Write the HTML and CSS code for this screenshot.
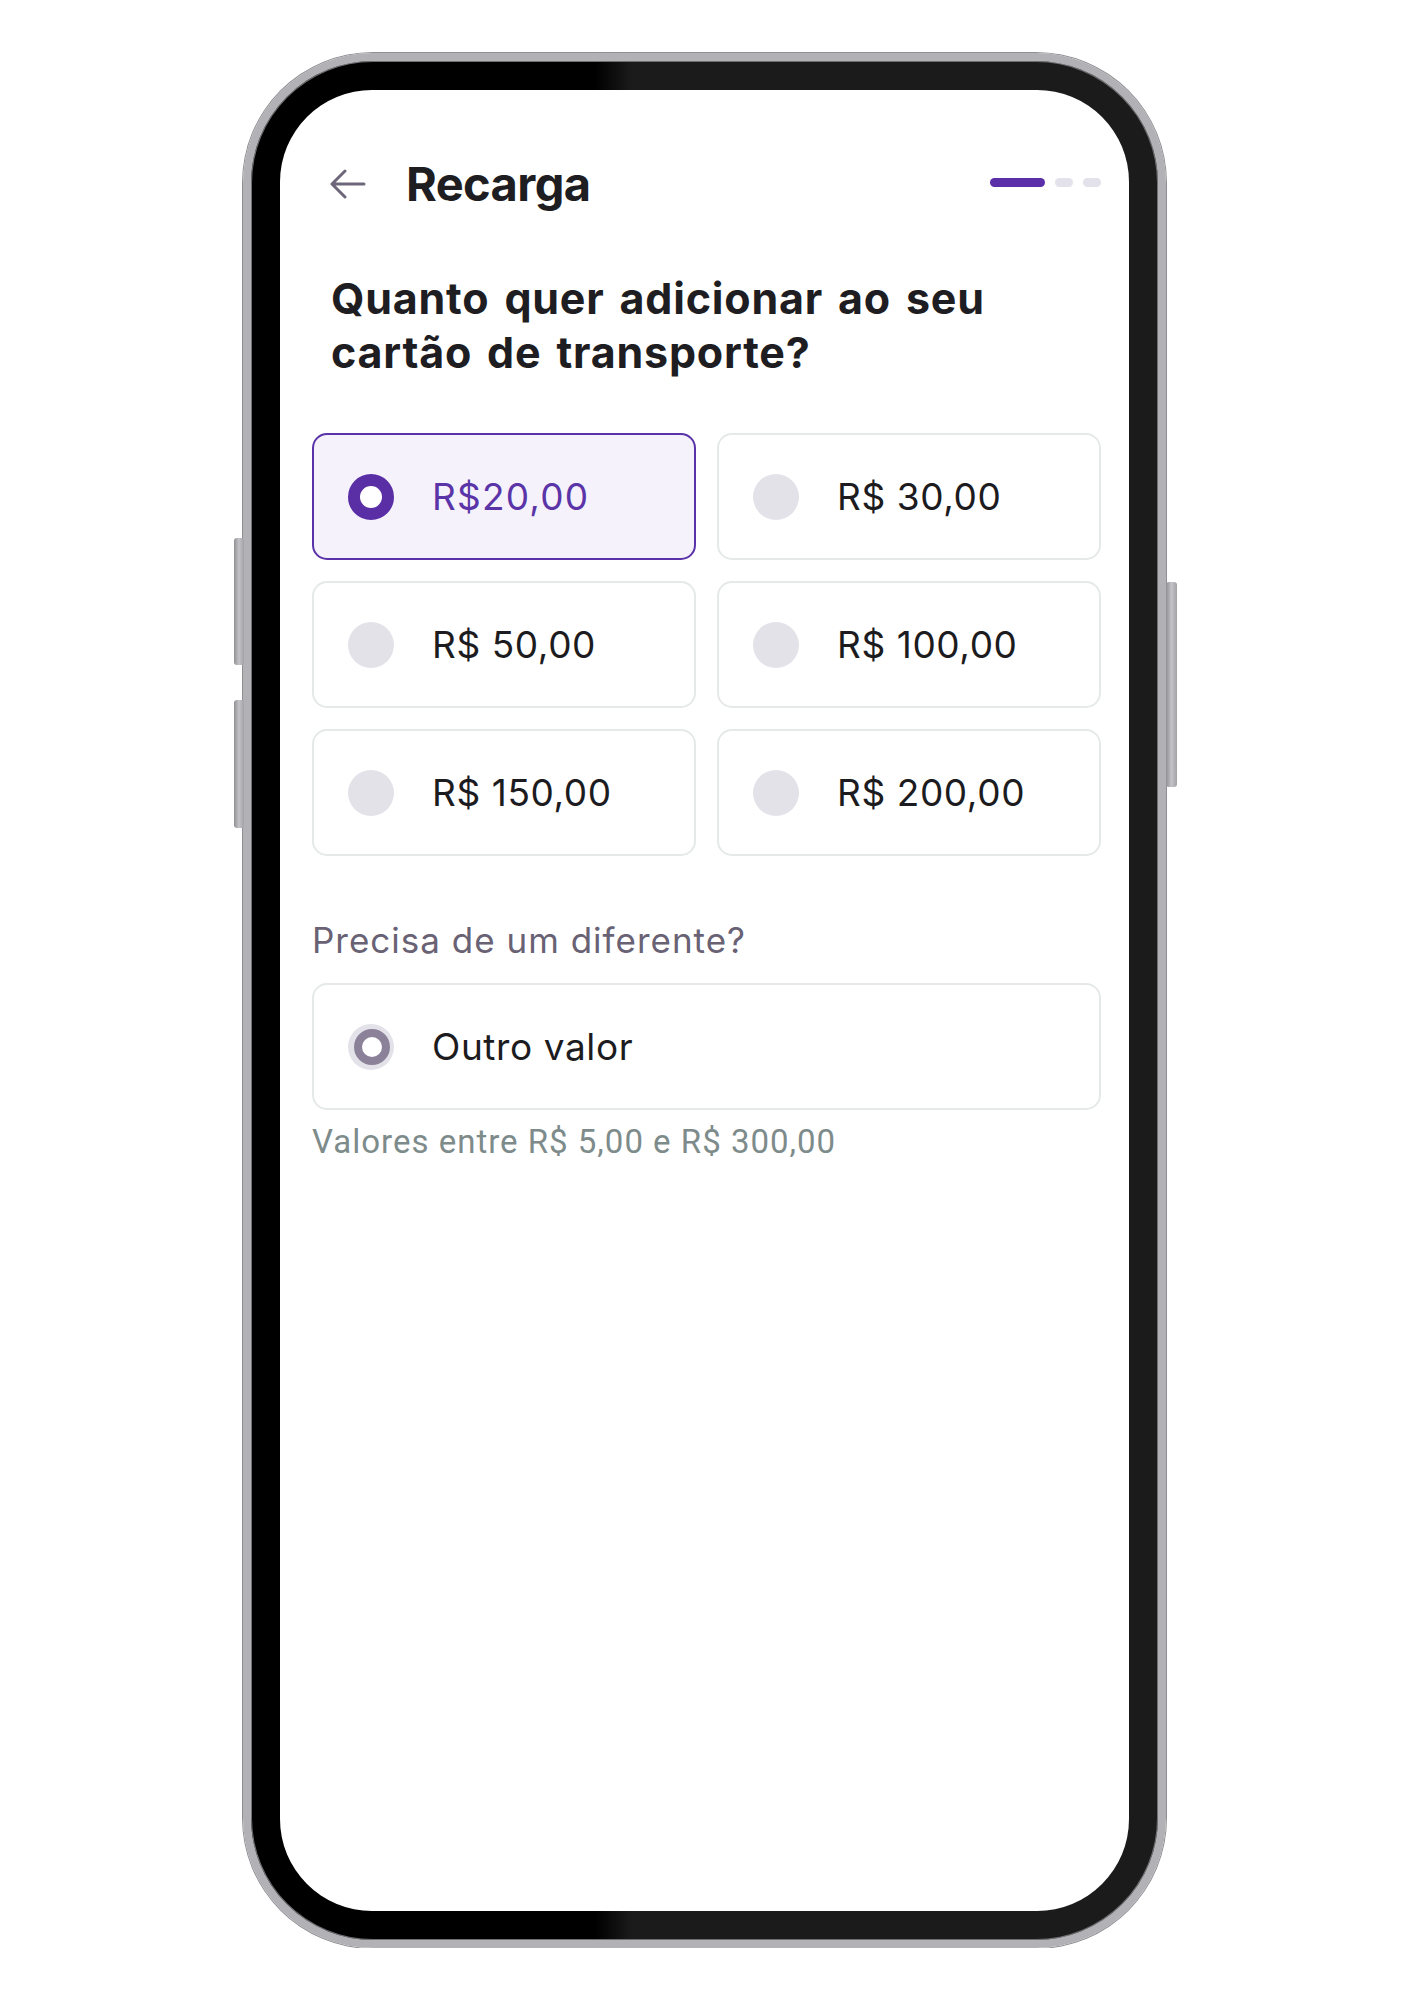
FILE: index.html
```html
<!DOCTYPE html>
<html lang="pt-BR">
<head>
  <meta charset="UTF-8">
  <title>Recarga</title>
  <link rel="stylesheet" href="styles.css">
</head>
<body>
  <div class="phone">
    <span class="side-btn btn-vol-up"></span>
    <span class="side-btn btn-vol-down"></span>
    <span class="side-btn btn-power"></span>

    <div class="screen">
      <div class="header">
        <svg class="back" width="36" height="32" viewBox="0 0 36 32">
          <path d="M2 16 H34 M2 16 L15 3 M2 16 L15 29" fill="none" stroke="#6e6779" stroke-width="3" stroke-linecap="round" stroke-linejoin="round"/>
        </svg>
        <h1>Recarga</h1>
        <div class="steps">
          <span class="step active"></span>
          <span class="step"></span>
          <span class="step"></span>
        </div>
      </div>

      <h2 class="question">Quanto quer adicionar ao seu<br>cartão de transporte?</h2>

      <div class="options">
        <div class="option selected"><span class="radio"></span>R$20,00</div>
        <div class="option"><span class="radio"></span>R$ 30,00</div>
        <div class="option"><span class="radio"></span>R$ 50,00</div>
        <div class="option"><span class="radio"></span>R$ 100,00</div>
        <div class="option"><span class="radio"></span>R$ 150,00</div>
        <div class="option"><span class="radio"></span>R$ 200,00</div>
      </div>

      <p class="other-label">Precisa de um diferente?</p>
      <div class="option wide"><span class="radio partial"></span>Outro valor</div>
      <p class="hint">Valores entre R$ 5,00 e R$ 300,00</p>
    </div>
  </div>
</body>
</html>
```

FILE: styles.css
```css
body {
  margin: 0;
  background-color: #fff;
  font-family: 'Inter', 'Noto Sans', sans-serif;
  color: #1c1b20;
}

.phone {
  position: relative;
  width: 923px;
  height: 1895px;
  margin: 53px 0 0 243px;
  padding: 29px;
  box-sizing: border-box;
  border: 8px solid #b2b2b6;
  border-radius: 130px;
  background: linear-gradient(90deg, #000 38%, #1b1b1b 42%);
  box-shadow: 0 0 0 1px #8e8e93, inset 0 0 0 1px #6f6f73;
}

.side-btn {
  position: absolute;
  width: 10px;
  border-radius: 3px;
  background: linear-gradient(90deg, #8f8f94, #c4c4c8 50%, #a2a2a6);
}

.btn-vol-up {
  left: -17px;
  top: 477px;
  height: 127px;
}

.btn-vol-down {
  left: -17px;
  top: 639px;
  height: 128px;
}

.btn-power {
  right: -19px;
  top: 521px;
  height: 205px;
  width: 11px;
}

.screen {
  height: 100%;
  box-sizing: border-box;
  padding: 66px 28px 0 32px;
  background-color: #fff;
  border-radius: 92px;
  overflow: hidden;
}

.header {
  display: flex;
  align-items: center;
  height: 56px;
  padding-left: 18px;
}

.back {
  flex: none;
}

.header h1 {
  margin: 0 0 0 40px;
  font-size: 47px;
  line-height: 56px;
  font-weight: 700;
  letter-spacing: -0.6px;
  color: #1e1d22;
}

.steps {
  display: flex;
  gap: 10px;
  margin-left: auto;
  margin-top: -4px;
}

.step {
  width: 18px;
  height: 9px;
  border-radius: 5px;
  background-color: #e3e1e9;
}

.step.active {
  width: 55px;
  background-color: #5a2fa7;
}

.question {
  margin: 59px 0 0;
  padding-left: 19px;
  font-size: 43px;
  line-height: 54px;
  font-weight: 700;
  letter-spacing: 0.8px;
  word-spacing: 4px;
  color: #1e1d22;
}

.options {
  display: grid;
  grid-template-columns: 1fr 1fr;
  gap: 21px;
  margin-top: 54px;
}

.option {
  display: flex;
  align-items: center;
  gap: 38px;
  height: 127px;
  padding-left: 34px;
  box-sizing: border-box;
  border: 2px solid #e6e9e9;
  border-radius: 15px;
  background-color: #fff;
  font-size: 37px;
  letter-spacing: 0.6px;
}

.option.selected {
  border-color: #5b33a8;
  background-color: #f5f2fc;
  color: #5b35a8;
  letter-spacing: 1.2px;
}

.radio {
  position: relative;
  flex: none;
  width: 46px;
  height: 46px;
  box-sizing: border-box;
  border-radius: 50%;
  background-color: #e4e2e9;
}

.selected .radio {
  border: 12px solid #5a2fa6;
  background-color: #fff;
}

.radio.partial::after {
  content: '';
  position: absolute;
  top: 5px;
  left: 6px;
  width: 36px;
  height: 36px;
  box-sizing: border-box;
  border: 8px solid #8b8299;
  border-radius: 50%;
  background-color: #fff;
}

.other-label {
  margin: 62px 0 0;
  font-size: 35px;
  line-height: 44px;
  letter-spacing: 1px;
  color: #696274;
}

.option.wide {
  margin-top: 21px;
}

.hint {
  margin: 12px 0 0;
  font-family: 'Roboto', sans-serif;
  font-size: 33px;
  line-height: 40px;
  letter-spacing: 1px;
  color: #7e8b8b;
}
```
